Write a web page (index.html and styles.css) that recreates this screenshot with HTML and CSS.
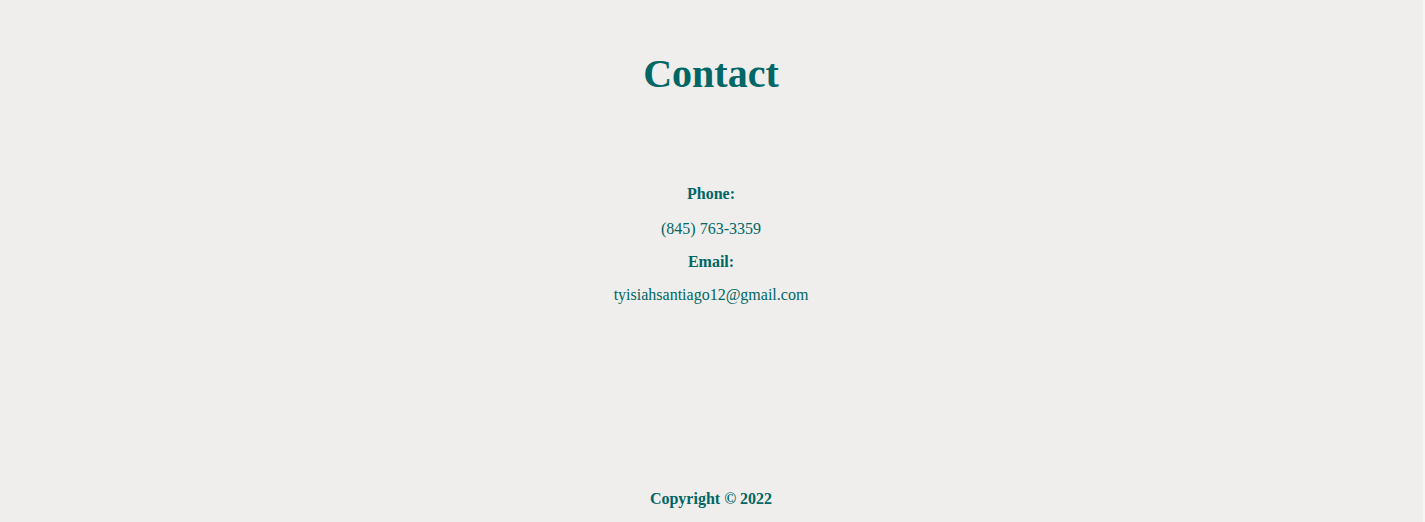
FILE: index.html
```html
<!DOCTYPE html>
<html lang="en">
<head>
<meta charset="utf-8">
<title>Contact</title>
<link rel="stylesheet" href="styles.css">
</head>
<body>
<div class="page">
  <header class="header">
    <h1 class="title">Contact</h1>
  </header>
  <main class="contact">
    <p class="label label-first">Phone:</p>
    <p class="value">(845) 763-3359</p>
    <p class="label">Email:</p>
    <p class="value">tyisiahsantiago12@gmail.com</p>
  </main>
  <footer class="footer">
    <p class="copyright">Copyright © 2022</p>
  </footer>
</div>
</body>
</html>
```

FILE: styles.css
```css
html, body {
  margin: 0;
  padding: 0;
  background: #efeeec;
}
body {
  font-family: "Liberation Serif", "Times New Roman", serif;
  color: #006666;
}
.page {
  display: flex;
  flex-direction: column;
  align-items: center;
  min-height: 522px;
  box-sizing: border-box;
  padding-top: 51px;
  padding-right: 1px;
  border-right: 2px solid #f6f6f5;
}
.title {
  margin: 0;
  font-size: 40px;
  font-weight: bold;
  line-height: 46px;
}
.contact {
  display: flex;
  flex-direction: column;
  align-items: center;
  gap: 15px;
  margin-top: 88px;
}
.contact p {
  margin: 0;
  font-size: 16px;
  line-height: 18px;
}
.label {
  font-weight: bold;
}
.label-first {
  margin-bottom: 2px !important;
}
.footer {
  margin-top: auto;
  padding-bottom: 14px;
}
.copyright {
  margin: 0;
  font-size: 16px;
  line-height: 18px;
  font-weight: bold;
}
```
